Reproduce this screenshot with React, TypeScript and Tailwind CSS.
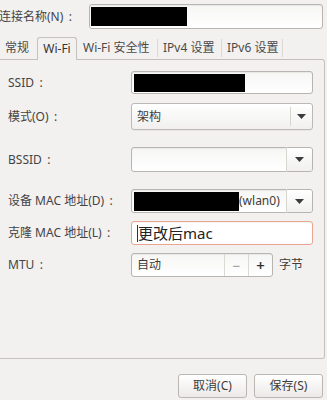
import React from "react";

const font = { fontFamily: '"Noto Sans", "Noto Sans CJK SC", sans-serif' };

// small dark triangle used by combo boxes
const Arrow = () => (
  <svg width="9" height="5" viewBox="0 0 9 5" className="block">
    <path d="M0 0 H9 L4.5 5 Z" fill="#3c3c3c" />
  </svg>
);

// GTK labels show the full-width colon centred in its box
const Colon = () => <span className="inline-block w-[14px] text-center">:</span>;

const fieldBase =
  "rounded-[3px] border border-[#b8b4af] bg-gradient-to-b from-[#f6f6f5] to-white shadow-[inset_0_1px_1px_rgba(0,0,0,0.06)]";

const comboBase =
  "rounded-[3px] border border-[#bcb8b3] bg-gradient-to-b from-white to-[#f1f0ef] shadow-[0_1px_0_rgba(0,0,0,0.04)]";

const Row = ({ label, className, children }: { label: string; className: string; children: React.ReactNode }) => (
  <div className={`flex items-center ${className}`}>
    <span className="w-[131px] shrink-0 pl-[8px] text-[12px] text-[#444]">
      {label}
      <Colon />
    </span>
    {children}
  </div>
);

const tabs = [
  { name: "Wi-Fi 安全性", w: "w-[81px]", pl: "pl-[6px]" },
  { name: "IPv4 设置", w: "w-[64px]", pl: "pl-[5px]" },
  { name: "IPv6 设置", w: "w-[61px]", pl: "pl-[5px]" },
];

export default function App() {
  return (
    <div className="w-[327px] h-[400px] overflow-hidden bg-[#f2f1f0] flex flex-col text-[#3c3c3c]" style={font}>
      {/* connection name */}
      <div className="mt-[4px] h-[25px] flex items-center">
        <span className="w-[90px] shrink-0 text-[12px] text-[#444] -ml-[1px]">
          连接名称(N)
          <Colon />
        </span>
        <div className={`w-[234px] h-[25px] flex items-center ${fieldBase}`}>
          <div className="ml-[1px] w-[96px] h-[19px] bg-black" />
        </div>
      </div>

      {/* tabs */}
      <div className="mt-[8px] h-[22px] flex items-stretch relative z-10 text-[12px]">
        <div className="w-[37px] pl-[5px] flex items-center text-[#4a4a4a]">常规</div>
        <div className="w-[40px] h-[23px] flex items-center justify-center border border-b-0 border-[#c4c0bb] rounded-t-[3px] bg-[#f2f1f0] text-[#333]">
          Wi-Fi
        </div>
        {tabs.map((t) => (
          <div key={t.name} className={`${t.w} ${t.pl} flex items-center relative text-[#4a4a4a]`}>
            {t.name}
            <span className="absolute right-0 top-[2px] bottom-[2px] w-px bg-[#dcd9d5]" />
          </div>
        ))}
      </div>

      {/* notebook page */}
      <div className="w-[325px] h-[300px] border border-l-0 border-[#c4c0bb] rounded-r-[3px] pt-[11px] flex flex-col">
        <Row label="SSID" className="h-[23px]">
          <div className={`w-[182px] h-[23px] flex items-center ${fieldBase}`}>
            <div className="ml-[2px] w-[111px] h-[18px] bg-black" />
          </div>
        </Row>

        <Row label="模式(O)" className="mt-[9px] h-[27px]">
          <div className={`w-[182px] h-[27px] flex items-center ${comboBase}`}>
            <span className="flex-1 pl-[5px] text-[12px]">架构</span>
            <span className="w-px h-[19px] bg-[#d8d5d1]" />
            <span className="w-[21px] flex justify-center">
              <Arrow />
            </span>
          </div>
        </Row>

        <Row label="BSSID" className="mt-[17px] h-[25px]">
          <div className={`w-[182px] h-[25px] flex items-center ${fieldBase}`}>
            <span className="flex-1" />
            <span className="w-px h-[25px] bg-[#d8d5d1]" />
            <span className="w-[25px] h-full flex items-center justify-center bg-gradient-to-b from-white to-[#f1f0ef] rounded-r-[3px]">
              <Arrow />
            </span>
          </div>
        </Row>

        <Row label="设备 MAC 地址(D)" className="mt-[17px] h-[24px]">
          <div className={`w-[182px] h-[24px] flex items-center ${fieldBase}`}>
            <div className="ml-[2px] w-[105px] h-[19px] bg-black" />
            <span className="flex-1 text-[12px]">(wlan0)</span>
            <span className="w-px h-[24px] bg-[#d8d5d1]" />
            <span className="w-[25px] h-full flex items-center justify-center bg-gradient-to-b from-white to-[#f1f0ef] rounded-r-[3px]">
              <Arrow />
            </span>
          </div>
        </Row>

        <Row label="克隆 MAC 地址(L)" className="mt-[8px] h-[24px]">
          <div className="w-[182px] h-[24px] flex items-center rounded-[3px] border border-[#eba48f] bg-white shadow-[inset_0_1px_1px_rgba(0,0,0,0.05)]">
            <span className="ml-[5px] w-px h-[17px] bg-[#333]" />
            <span className="text-[15px] text-[#222] leading-none">更改后mac</span>
          </div>
        </Row>

        <Row label="MTU" className="mt-[8px] h-[24px]">
          <div className={`w-[142px] h-[24px] flex items-stretch ${fieldBase}`}>
            <span className="flex-1 pl-[5px] flex items-center text-[12px]">自动</span>
            <span className="w-[24px] border-l border-[#dcd9d5] flex items-center justify-center text-[#9a9a9a] text-[14px]">−</span>
            <span className="w-[24px] border-l border-[#dcd9d5] flex items-center justify-center text-[#333] text-[15px] font-semibold">+</span>
          </div>
          <span className="ml-[6px] text-[12px]">字节</span>
        </Row>
      </div>

      {/* buttons */}
      <div className="mt-[15px] flex justify-end gap-[7px] pr-[4px]">
        <button className="w-[69px] h-[24px] rounded-[3px] border border-[#bab6b1] bg-gradient-to-b from-white to-[#eceae8] text-[12px] text-[#3c3c3c]">
          取消(C)
        </button>
        <button className="w-[69px] h-[24px] rounded-[3px] border border-[#bab6b1] bg-gradient-to-b from-white to-[#eceae8] text-[12px] text-[#3c3c3c]">
          保存(S)
        </button>
      </div>
    </div>
  );
}
